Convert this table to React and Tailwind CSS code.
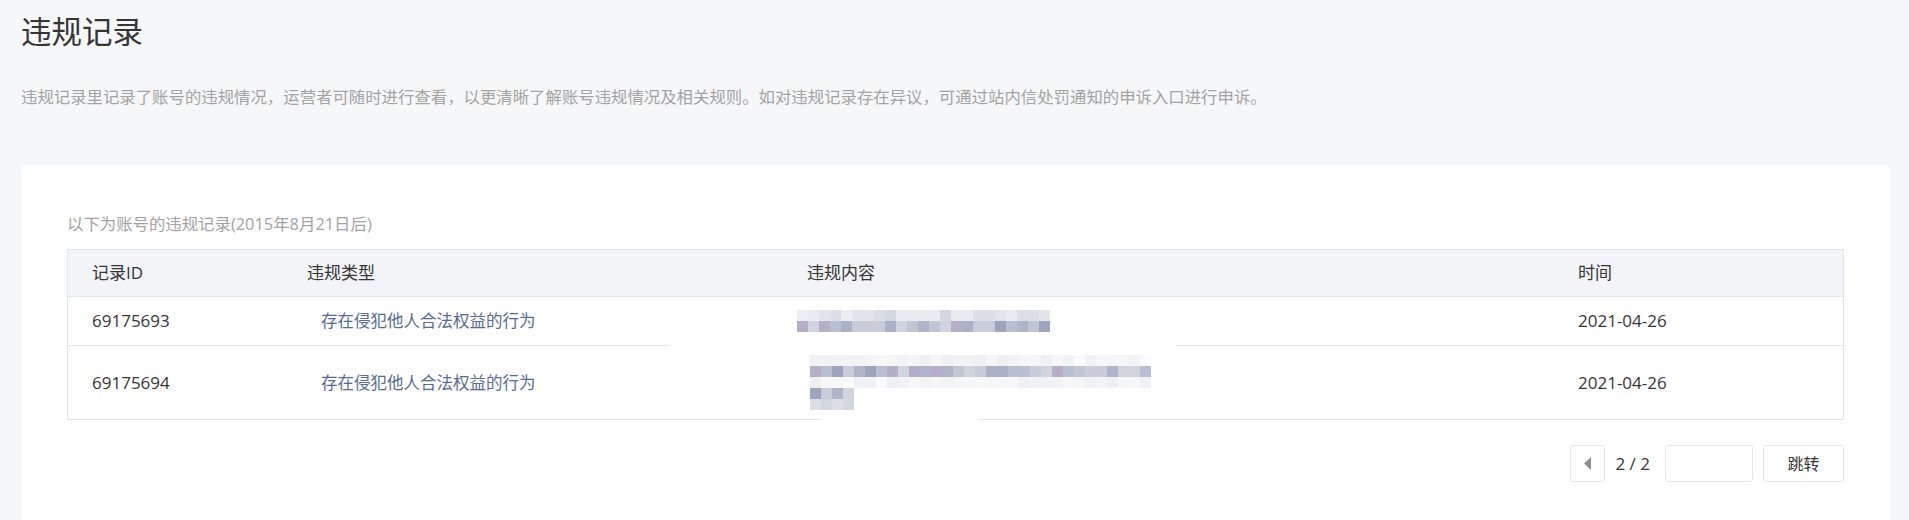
import React from 'react';

const palettes = {
  faint: ['#fafbfc', '#f5f6f8', '#f1f2f5', '#eef0f4', '#f7f7f9', '#f2f3f6'],
  light: ['#e9ebf0', '#e1e4ea', '#d9dde6', '#eceef2', '#d2d7e1', '#e4e5ec', '#dcdfe7'],
  dark: ['#c8cdd9', '#b8bfd0', '#a9b1c6', '#9ca5bd', '#b4afc7', '#c1c6d3', '#d0d4de', '#aeb5c9'],
};

const rnd = (i) => {
  const x = Math.sin(i * 12.9898 + 78.233) * 43758.5453;
  return x - Math.floor(x);
};

// pixelated (masked) violation content
const Mosaic = ({ seed, rows }) => (
  <div className="flex flex-col">
    {rows.map((r, ri) => (
      <div key={ri} className="flex" style={{ paddingLeft: (r.offset || 0) * 11 }}>
        {Array.from({ length: r.n }).map((_, ci) => {
          const p = palettes[r.tone];
          const c = p[Math.floor(rnd(seed + ri * 97 + ci * 7) * p.length)];
          return <div key={ci} className="w-[11px] h-[11px]" style={{ backgroundColor: c }} />;
        })}
      </div>
    ))}
  </div>
);

const records = [
  {
    id: '69175693',
    type: '存在侵犯他人合法权益的行为',
    date: '2021-04-26',
    height: 'h-[49px] border-b border-[#e6e7eb]',
    mosaic: { seed: 3, shift: 'ml-[-10px]', rows: [{ n: 23, tone: 'light' }, { n: 23, tone: 'dark' }] },
  },
  {
    id: '69175694',
    type: '存在侵犯他人合法权益的行为',
    date: '2021-04-26',
    height: 'h-[73px]',
    mosaic: {
      seed: 41,
      shift: 'ml-[3px]',
      rows: [
        { n: 31, tone: 'faint' },
        { n: 31, tone: 'dark' },
        { n: 31, tone: 'faint' },
        { n: 4, tone: 'dark' },
        { n: 4, tone: 'light' },
      ],
    },
  },
];

const App = () => {
  return (
    <div className="min-h-screen bg-[#f6f7f9] pl-[21px] pr-[19px] font-['Open_Sans','Noto_Sans_CJK_SC',sans-serif] text-[#353535]">
      <h1 className="pt-[11px] text-[30.5px] leading-[40px] font-normal">违规记录</h1>
      <p className="mt-[34px] text-[16.4px] leading-[24px] text-[#a3a3a3]">
        违规记录里记录了账号的违规情况，运营者可随时进行查看，以更清晰了解账号违规情况及相关规则。如对违规记录存在异议，可通过站内信处罚通知的申诉入口进行申诉。
      </p>

      <div className="mt-[56px] bg-white rounded-[4px] px-[46px] pt-[47px] pb-[46px]">
        <p className="text-[16.4px] leading-[24px] text-[#a3a3a3]">以下为账号的违规记录(2015年8月21日后)</p>

        <div className="mt-[13px] border border-[#e3e5ea] text-[17px]">
          <div className="grid grid-cols-[215px_500px_771px_1fr] h-[47px] items-center bg-[#f3f4f8] border-b border-[#e6e7eb]">
            <div className="pl-6">记录ID</div>
            <div className="pl-6">违规类型</div>
            <div className="pl-6">违规内容</div>
            <div className="pl-6">时间</div>
          </div>

          {records.map((r, i) => (
            <div key={r.id} className={`relative grid grid-cols-[215px_500px_771px_1fr] items-center ${r.height}`}>
              <div className="pl-6">{r.id}</div>
              <div className="pl-6">
                <span className="ml-[14px] text-[16.5px] text-[#576b95]">{r.type}</span>
              </div>
              <div className={`pl-6 ${r.mosaic.shift}`}>
                <Mosaic seed={r.mosaic.seed} rows={r.mosaic.rows} />
              </div>
              <div className="pl-6">{r.date}</div>
              {i === 1 && (
                <>
                  <div className="absolute left-[601px] top-[-1px] w-[507px] h-[2px] bg-white/95" />
                  <div className="absolute left-[751px] bottom-[-1px] w-[160px] h-[2px] bg-white/90" />
                </>
              )}
            </div>
          ))}
        </div>

        <div className="mt-[25px] flex items-center justify-end">
          <button className="w-[35px] h-[37px] border border-[#e5e6ea] rounded-[3px] bg-white flex items-center justify-center">
            <svg width="7" height="13" viewBox="0 0 7 13">
              <path d="M7 0 L0 6.5 L7 13 Z" fill="#8c8c8c" />
            </svg>
          </button>
          <span className="ml-[10px] text-[17px] leading-[24px]">2 / 2</span>
          <input className="ml-[15px] w-[88px] h-[37px] border border-[#e5e6ea] rounded-[3px] bg-white outline-none px-2" />
          <button className="ml-[10px] w-[81px] h-[37px] border border-[#e5e6ea] rounded-[3px] bg-white text-[16px]">跳转</button>
        </div>
      </div>
    </div>
  );
};

export default App;
